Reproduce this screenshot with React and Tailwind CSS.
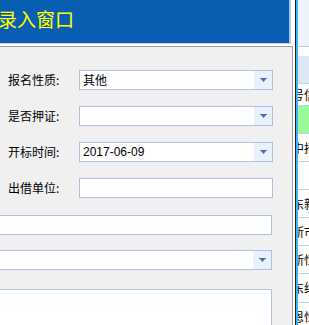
import React from 'react';

const cjk = { fontFamily: '"Noto Sans CJK SC", "Noto Sans", sans-serif' };

function Arrow() {
  return (
    <svg width="7" height="4" viewBox="0 0 7 4">
      <path d="M0 0h7v1H0z M1 1h5l-2.5 3z" fill="#4b6fa6" />
    </svg>
  );
}

function Field({ value, dropdown, mono }) {
  return (
    <div className="flex h-[20px] flex-1 border border-[#aec3dd] bg-white">
      <div
        className="flex flex-1 items-center pl-[3px] text-[12px] leading-none text-black"
        style={mono ? { fontFamily: '"Liberation Sans", sans-serif' } : cjk}
      >
        {value}
      </div>
      {dropdown && (
        <div className="flex w-[18px] items-center justify-center bg-[#e7f0fb]">
          <Arrow />
        </div>
      )}
    </div>
  );
}

function FormRow({ label, children }) {
  return (
    <div className="flex h-[20px] shrink-0 items-center">
      <div className="w-[71px] text-[12px] leading-none text-black" style={cjk}>
        {label}
      </div>
      {children}
    </div>
  );
}

const rows = [
  { h: 'h-[22px]', text: '号信息' },
  { h: 'h-[28px]', text: '', green: true },
  { h: 'h-[28px]', text: '中招标' },
  { h: 'h-[28px]', text: '' },
  { h: 'h-[28px]', text: '东新区' },
  { h: 'h-[28px]', text: '新市场' },
  { h: 'h-[28px]', text: '新恒业' },
  { h: 'h-[29px]', text: '东线路' },
  { h: 'h-[29px]', text: '恩恒达' },
];

export default function App() {
  return (
    <div className="flex h-[325px] w-[309px] overflow-hidden bg-white">
      {/* dialog */}
      <div className="flex w-[295px] shrink-0 flex-col overflow-hidden bg-white">
        <div className="flex h-[43px] shrink-0">
          <div
            className="flex w-[289px] items-start overflow-hidden bg-[#0a5eb1] pt-[8px] text-[19px] leading-[22px] text-[#ffff00]"
            style={cjk}
          >
            <span className="-ml-[2px] whitespace-nowrap">录入窗口</span>
          </div>
          <div className="w-[2px] bg-[#a9c9ec]" />
        </div>
        <div className="h-[1px] w-[291px] shrink-0 bg-[#bcd3ec]" />
        <div className="h-[2px] shrink-0" />
        <div className="flex w-[293px] flex-1 shrink-0 flex-col border-t border-r border-[#a0a0a0] bg-[#f0f0f0]">
          <div className="flex shrink-0 flex-col gap-[16px] pl-[8px] pr-[19px] pt-[23px]">
            <FormRow label="报名性质:">
              <Field value="其他" dropdown />
            </FormRow>
            <FormRow label="是否押证:">
              <Field value="" dropdown />
            </FormRow>
            <FormRow label="开标时间:">
              <Field value="2017-06-09" dropdown mono />
            </FormRow>
            <FormRow label="出借单位:">
              <Field value="" />
            </FormRow>
          </div>
          <div className="-ml-[20px] mt-[17px] flex shrink-0 flex-col pr-[20px]">
            <div className="h-[20px] shrink-0 border border-[#aec3dd] bg-white" />
            <div className="mt-[15px] flex h-[20px] shrink-0 border border-[#aec3dd] bg-white">
              <div className="flex-1" />
              <div className="flex w-[18px] items-center justify-center bg-[#e7f0fb]">
                <Arrow />
              </div>
            </div>
            <div className="mt-[19px] h-[60px] shrink-0 border border-[#aec3dd] bg-white" />
          </div>
        </div>
      </div>
      {/* grid edge */}
      <div className="w-[1px] shrink-0 bg-[#1e1e1e]" />
      <div className="w-[2px] shrink-0 bg-[#45b4ec]" />
      <div className="flex flex-1 flex-col overflow-hidden">
        <div className="h-[46px] shrink-0 bg-[#edf3fb]" />
        <div className="h-[1px] shrink-0 bg-[#c8c8c8]" />
        <div className="h-[9px] shrink-0 bg-white" />
        <div className="h-[28px] shrink-0 border-b border-[#c3d3e6] bg-[#dce7f5]" />
        {rows.map((r, i) => (
          <div
            key={i}
            className={`${r.h} flex shrink-0 items-center overflow-hidden border-b border-[#c3d3e6] ${r.green ? 'bg-[#98fb98]' : 'bg-white'}`}
          >
            <span className="-ml-[6px] whitespace-nowrap text-[12px] leading-none text-black" style={cjk}>
              {r.text}
            </span>
          </div>
        ))}
      </div>
    </div>
  );
}
